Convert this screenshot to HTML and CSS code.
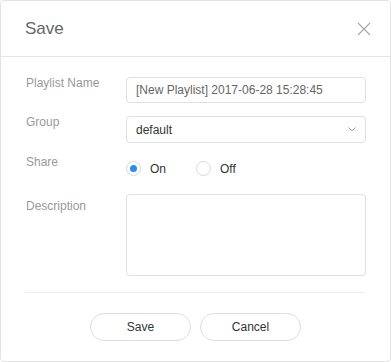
FILE: index.html
```html
<!DOCTYPE html>
<html>
<head>
<meta charset="utf-8">
<link rel="stylesheet" href="styles.css">
</head>
<body>
<div class="dialog">
  <div class="header">
    <span class="title">Save</span>
    <svg class="close" width="14" height="14" viewBox="0 0 14 14"><path d="M1 1L13 13M13 1L1 13" stroke="#a6a6a6" stroke-width="1.1" fill="none"/></svg>
  </div>
  <div class="body">
    <div class="row">
      <div class="label">Playlist Name</div>
      <div class="control input">[New Playlist] 2017-06-28 15:28:45</div>
    </div>
    <div class="row">
      <div class="label">Group</div>
      <div class="control input select">
        <span class="val">default</span>
        <svg class="chev" width="8" height="5" viewBox="0 0 8 5"><path d="M0.5 0.5L4 4L7.5 0.5" stroke="#999" stroke-width="1" fill="none"/></svg>
      </div>
    </div>
    <div class="row">
      <div class="label share">Share</div>
      <div class="control radios">
        <span class="radio"><span class="circle on"></span><span class="rtext">On</span></span>
        <span class="radio"><span class="circle"></span><span class="rtext">Off</span></span>
      </div>
    </div>
    <div class="row">
      <div class="label desc">Description</div>
      <div class="control textarea"></div>
    </div>
  </div>
  <div class="footer">
    <button class="btn">Save</button>
    <button class="btn">Cancel</button>
  </div>
</div>
</body>
</html>
```
FILE: styles.css
```css
* { box-sizing: border-box; }
html, body { margin: 0; padding: 0; background: #fff; }
body { font-family: "Liberation Sans", Arial, sans-serif; }
.dialog {
  width: 391px;
  height: 362px;
  border: 1px solid #e3e3e3;
  border-radius: 4px;
  background: #fff;
  display: flex;
  flex-direction: column;
}
.header {
  height: 56px;
  border-bottom: 1px solid #e5e5e5;
  display: flex;
  align-items: center;
  justify-content: space-between;
  padding: 0 19px 0 24px;
}
.title { font-size: 17px; color: #666; }
.close { display: block; }
.body {
  padding: 20px 24px 0 25px;
  display: flex;
  flex-direction: column;
  gap: 13px;
}
.row { display: flex; align-items: flex-start; }
.label {
  width: 100px;
  font-size: 12px;
  line-height: 12px;
  color: #999;
  padding-top: 0;
}
.label.desc { padding-top: 6px; }
.control { width: 240px; }
.input {
  height: 26px;
  border: 1px solid #dfdfe3;
  border-radius: 4px;
  padding: 0 9px;
  font-size: 12px;
  color: #666;
  display: flex;
  align-items: center;
}
.select { color: #333; justify-content: space-between; height: 27px; padding-right: 9px; }
.chev { display: block; }
.radios { height: 25px; display: flex; align-items: center; }
.radio { display: flex; align-items: center; width: 70px; font-size: 12px; color: #333; }
.circle {
  width: 15px; height: 15px;
  border: 1px solid #d9d9d9;
  border-radius: 50%;
  margin-right: 9px;
  position: relative;
}
.circle.on::after {
  content: "";
  position: absolute;
  left: 3px; top: 3px;
  width: 7px; height: 7px;
  border-radius: 50%;
  background: #2d8cf0;
}
.textarea {
  height: 82px;
  border: 1px solid #dfdfe3;
  border-radius: 4px;
}
.footer {
  margin: 16px 24px 0 24px;
  border-top: 1px solid #eee;
  padding-top: 20px;
  display: flex;
  justify-content: center;
  gap: 9px;
}
.btn {
  width: 101px;
  height: 28px;
  border: 1px solid #dcdee2;
  border-radius: 14px;
  background: #fff;
  font-family: "Liberation Sans", Arial, sans-serif;
  font-size: 12px;
  color: #333;
  padding: 0;
}
```
